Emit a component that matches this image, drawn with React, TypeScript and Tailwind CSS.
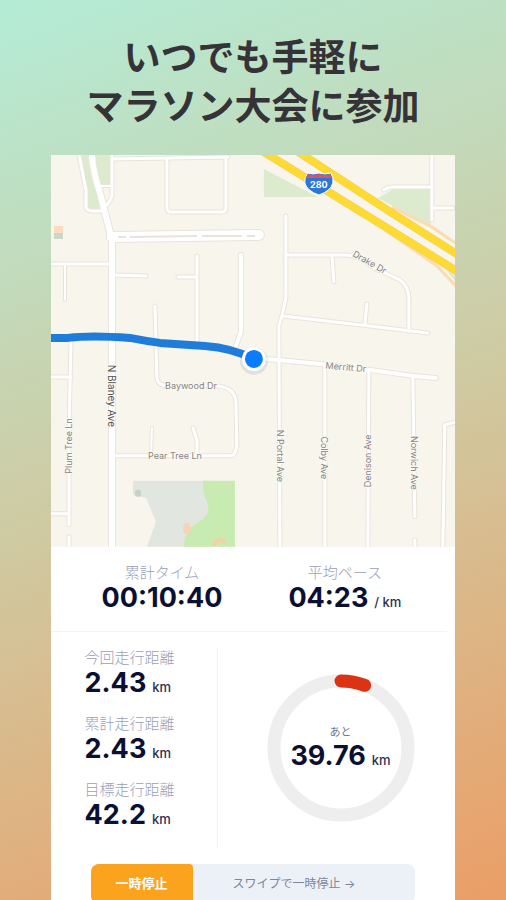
import {ReactNode} from "react";

const TOTAL_KM = 42.2;
const DONE_KM = 2.43;

const roads = [
    {d: "M79 155 L86 190 V207 Q87 211 91 211 H102", w: 3},
    {d: "M112 155 V196 Q111 200 107 205", w: 3},
    {d: "M99 186 H112", w: 2},
    {d: "M112 159 L228 157", w: 3},
    {d: "M167 158 V208 Q167 212 171 212 H222 Q226 212 226 208 V157", w: 3},
    {d: "M51 264 H112", w: 3},
    {d: "M65 264 V300", w: 2},
    {d: "M112 275 L146 276", w: 3},
    {d: "M178 277 H197", w: 3},
    {d: "M197 256 V342", w: 3},
    {d: "M241 255 V332 L236 346", w: 4},
    {d: "M155 306 L157 378 Q158 386 168 386 H218 Q235 388 236 402 L237 446 Q235 456 231 456 H112", w: 3},
    {d: "M71 340 L69 430 V525", w: 3},
    {d: "M69 537 V547", w: 3},
    {d: "M51 377 H71", w: 3},
    {d: "M51 514 H69", w: 3},
    {d: "M152 428 L151 455", w: 2},
    {d: "M193 428 L197 440 V455", w: 3},
    {d: "M384 190 Q388 187 393 187 H432", w: 3},
    {d: "M432 155 V220", w: 3},
    {d: "M432 208 H453", w: 3},
    {d: "M286 216 V298 L282 316 L279 326 L280 547", w: 3},
    {d: "M287 255 H346 Q360 256 372 267 L400 280 Q409 287 409 298 V331", w: 3},
    {d: "M332 255 L334 282", w: 3},
    {d: "M283 316 L370 326 L428 333", w: 3},
    {d: "M367 304 L365 325", w: 3},
    {d: "M254 358 L278 360 L320 364 L370 370 L413 376 L436 378", w: 4},
    {d: "M325 365 V547", w: 3},
    {d: "M369 372 L368 547", w: 3},
    {d: "M413 377 L415 517", w: 3},
    {d: "M415 540 V547", w: 3},
    {d: "M457 422 L445 425 L443 547", w: 3},
    {d: "M112 237 L259 235", w: 10},
    {d: "M92 155 Q93 172 100 193 L112 240 V547", w: 6},
]

const streetNames = [
    {name: "N Blaney Ave", x: 112, y: 396, r: 90, size: 10, fill: "#55534f"},
    {name: "Plum Tree Ln", x: 69, y: 446, r: -90, size: 9, fill: "#86837e"},
    {name: "Baywood Dr", x: 191, y: 386, r: 0, size: 9, fill: "#86837e"},
    {name: "Pear Tree Ln", x: 175, y: 456, r: 0, size: 9, fill: "#86837e"},
    {name: "Drake Dr", x: 370, y: 262, r: 30, size: 9, fill: "#86837e"},
    {name: "Merritt Dr", x: 346, y: 367, r: 5, size: 9, fill: "#86837e"},
    {name: "N Portal Ave", x: 281, y: 456, r: 90, size: 9, fill: "#86837e"},
    {name: "Colby Ave", x: 325, y: 458, r: 90, size: 9, fill: "#86837e"},
    {name: "Denison Ave", x: 368, y: 461, r: -90, size: 9, fill: "#86837e"},
    {name: "Norwich Ave", x: 415, y: 463, r: 90, size: 9, fill: "#86837e"},
]

const RouteMap = () => (
    <svg viewBox="51 155 405 392" className="block h-auto w-full" role="img" aria-label="Map">
        <rect x="51" y="155" width="405" height="392" fill="#f8f5ed"/>
        <g fill="#dcebcd">
            <path d="M79 155 H91 L99 193 V209 H87 L85 187 Z"/>
            <path d="M94 155 H111 V185 H100 Z"/>
            <path d="M264 169 L318 197 H264 Z"/>
            <path d="M378 198 L394 189 H431 V226 Z"/>
            <path d="M440 262 L456 267 V282 Z"/>
        </g>
        <rect x="54" y="226" width="9" height="7" fill="#fbdcc2"/>
        <rect x="54" y="233" width="9" height="6" fill="#cbd5ca"/>

        {/* park */}
        <path d="M133 481 H210 V547 H147 L156 522 L146 498 L133 495 Z" fill="#e1e6e1"/>
        <path d="M203 481 H235 V547 H184 C184 538 188 528 196 524 C207 518 211 511 207 502 C203 494 203 489 203 481 Z" fill="#c7ebb1"/>
        <ellipse cx="187" cy="529" rx="4" ry="6" fill="#f5d5b5"/>
        <path d="M214 546 A6 6 0 0 1 225 543" fill="none" stroke="#f5cfa5" strokeWidth="4"/>
        <rect x="135" y="490" width="6" height="7" rx="2" fill="#c9d0ca"/>

        <g fill="none" strokeLinecap="round" strokeLinejoin="round">
            {roads.map((road) => <path key={road.d} d={road.d} stroke="#e8e4dc" strokeWidth={road.w + 2}/>)}
            {roads.map((road) => <path key={road.d} d={road.d} stroke="#ffffff" strokeWidth={road.w}/>)}
        </g>
        <path d="M118 237 H126 M130 237 L197 236 M202 236 H242 M247 236 H255" stroke="#e8e4dc" strokeWidth="2"/>

        {/* freeway */}
        <g fill="none">
            <path d="M392 207 L432 227 L457 244" stroke="#fadcae" strokeWidth="3"/>
            <path d="M385 230 L436 265 L457 287" stroke="#fadcae" strokeWidth="3"/>
            <path d="M264 152 L392 231 L460 273" stroke="#f4c95a" strokeWidth="8"/>
            <path d="M297 151 L392 213 L460 256" stroke="#f4c95a" strokeWidth="8"/>
            <path d="M264 152 L392 231 L460 273" stroke="#fddb32" strokeWidth="7"/>
            <path d="M297 151 L392 213 L460 256" stroke="#fddb32" strokeWidth="7"/>
        </g>
        <path d="M308 173 Q313 175 319 173 Q325 175 331 173 Q334 178 333 183 Q331 191 319 195 Q307 191 305 183 Q304 178 308 173 Z"
              fill="#2d76d8" stroke="#ffffff" strokeWidth="1"/>
        <path d="M308 174 Q313 176 319 174 Q325 176 330 174 L332 178 H306 Z" fill="#dc5363"/>
        <text x="319" y="188" textAnchor="middle" fontSize="9" fontWeight="700" fill="#ffffff">280</text>

        {streetNames.map((street) => (
            <text key={street.name} transform={`translate(${street.x} ${street.y}) rotate(${street.r})`}
                  textAnchor="middle" dominantBaseline="central" fontSize={street.size} fill={street.fill}
                  stroke="#fbf9f4" strokeWidth="2" paintOrder="stroke">
                {street.name}
            </text>
        ))}

        {/* route so far and current position */}
        <path d="M51 338 H68 Q90 335 130 338 Q145 341 160 343 L205 346 Q232 348 254 359" fill="none" stroke="#1f7cdb" strokeWidth="8"/>
        <circle cx="254" cy="361" r="14" fill="#00000014"/>
        <circle cx="254" cy="359" r="12" fill="#ffffff"/>
        <circle cx="254" cy="359" r="9" fill="#0a7cff"/>
    </svg>
)

const Stat = ({label, value, unit}: { label: string, value: string, unit?: ReactNode }) => (
    <div>
        <dt className="text-[15px] leading-5 font-light text-[#9a9fb8]">{label}</dt>
        <dd className="text-[27px] leading-[30px] font-bold text-[#0b1033]">
            {value}
            {unit && <span className="ml-1.5 text-[13px] leading-4 font-medium text-[#2b3050]">{unit}</span>}
        </dd>
    </div>
)

const RemainingRing = () => (
    <div className="relative w-[148px]">
        <svg viewBox="0 0 148 148" className="block w-full" aria-hidden="true">
            <circle cx="74" cy="74" r="67" fill="none" stroke="#eeeeee" strokeWidth="13"/>
            <circle cx="74" cy="74" r="67" fill="none" stroke="#dc3314" strokeWidth="13" strokeLinecap="round"
                    pathLength={TOTAL_KM} strokeDasharray={`${DONE_KM} ${TOTAL_KM}`} transform="rotate(-90 74 74)"/>
        </svg>
        <div className="absolute inset-0 flex flex-col items-center justify-center">
            <p className="text-[11px] leading-4 text-[#6f748f]">あと</p>
            <p className="text-[27px] leading-8 font-bold whitespace-nowrap text-[#0b1033]">
                39.76<span className="ml-1.5 text-[13px] leading-4 font-medium text-[#2b3050]">km</span>
            </p>
        </div>
    </div>
)

const App = () => {
    return (
        <div className="flex h-screen flex-col overflow-hidden bg-[linear-gradient(160deg,#b4ecd6_0%,#cfcaa2_50%,#eb9e66_100%)] px-[10%] font-[Inter,'Noto_Sans_CJK_JP',sans-serif]">
            <h1 className="pt-[33px] pb-6 text-center text-[37px] leading-[49px] font-bold whitespace-nowrap text-[#363338]">
                いつでも手軽に<br/>マラソン大会に参加
            </h1>
            <main className="shrink-0 bg-white pb-12">
                <RouteMap/>
                <dl className="mr-2 flex justify-between border-b border-[#f3f3f5] pt-4 pr-[46px] pb-[18px] pl-[51px] text-center">
                    <Stat label="累計タイム" value="00:10:40"/>
                    <Stat label="平均ペース" value="04:23" unit="/ km"/>
                </dl>
                <div className="flex pt-4 pb-4">
                    <dl className="flex w-[167px] flex-col gap-4 border-r border-[#f3f3f5] pl-[34px] pb-[18px]">
                        <Stat label="今回走行距離" value="2.43" unit="km"/>
                        <Stat label="累計走行距離" value="2.43" unit="km"/>
                        <Stat label="目標走行距離" value="42.2" unit="km"/>
                    </dl>
                    <div className="flex flex-1 items-center justify-center pl-2">
                        <RemainingRing/>
                    </div>
                </div>
                <div className="mx-10 flex h-10 overflow-hidden rounded-lg bg-[#ecf0f7] text-xs">
                    <button type="button" className="w-[102px] rounded bg-[#fba31d] text-[13px] font-bold text-white">
                        一時停止
                    </button>
                    <p className="flex flex-1 items-center justify-center pr-5 text-[#7f8599]">スワイプで一時停止 →</p>
                </div>
            </main>
        </div>
    )
}

export default App;
